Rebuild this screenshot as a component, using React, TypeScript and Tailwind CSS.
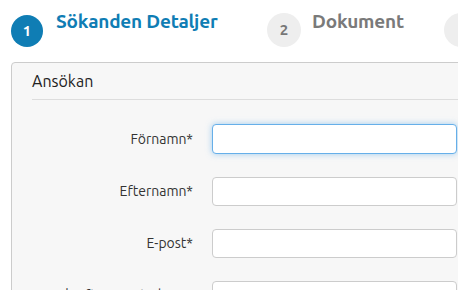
import React from "react";

const fields = ["Förnamn*", "Efternamn*", "E-post*", "Bekräfta e-postadress*"];

const App = () => {
  return (
    <div
      className="w-[458px] h-[290px] overflow-hidden bg-white text-[#333]"
      style={{ fontFamily: "Ubuntu, 'Open Sans', 'DejaVu Sans', sans-serif" }}
    >
      <div className="flex h-[62px] pl-[11px] pt-[15px]">
        <div className="flex w-[256px] shrink-0">
          <div className="w-[32px] h-[32px] rounded-full bg-[#0f7db4] text-white font-bold text-[15px] flex items-center justify-center shrink-0">
            1
          </div>
          <div className="ml-[13px] -mt-[8px] text-[19px] font-bold text-[#0f7db4] tracking-[-0.2px]">
            Sökanden Detaljer
          </div>
        </div>
        <div className="flex w-[177px] shrink-0 -mt-[2px]">
          <div className="w-[34px] h-[34px] rounded-full bg-[#eeeeee] text-[#777] font-bold text-[15px] flex items-center justify-center shrink-0">
            2
          </div>
          <div className="ml-[11px] -mt-[6px] text-[19px] font-bold text-[#7a7a7a] tracking-[-0.2px]">
            Dokument
          </div>
        </div>
        <div className="w-[34px] h-[34px] -mt-[2px] rounded-full bg-[#eeeeee] shrink-0" />
      </div>

      <div className="ml-[11px] w-[470px] rounded-[4px] border border-[#cccccc] bg-[#f7f7f7] px-[20px]">
        <div className="h-[37px] border-b border-[#dddddd] pt-[6px] text-[16px] text-[#222]">
          Ansökan
        </div>
        <div className="flex flex-col gap-[23px] pt-[24px]">
          {fields.map((label, i) => (
            <div key={label} className="flex items-center">
              <div className="w-[161px] text-right text-[14px] text-[#333] whitespace-nowrap">{label}</div>
              <input
                type="text"
                className={
                  i === 0
                    ? "ml-[19px] w-[245px] h-[30px] rounded-[4px] bg-white border border-[#66afe9] shadow-[0_0_6px_rgba(102,175,233,0.6)] outline-none"
                    : "ml-[19px] w-[245px] h-[29px] rounded-[4px] bg-white border border-[#cccccc] outline-none"
                }
              />
            </div>
          ))}
        </div>
      </div>
    </div>
  );
};

export default App;
